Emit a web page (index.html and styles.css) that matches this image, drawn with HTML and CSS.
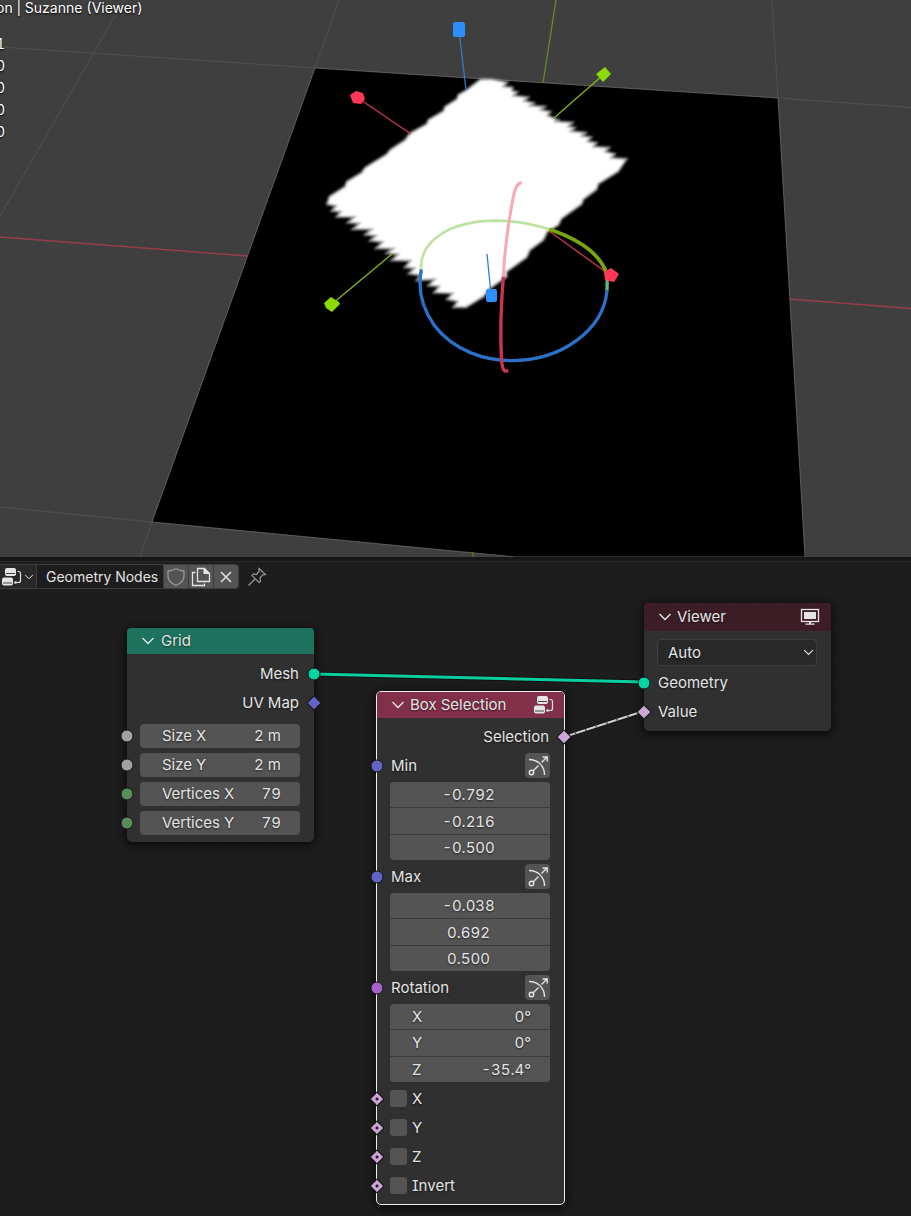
FILE: index.html
```html
<!DOCTYPE html>
<html lang="en">
<head>
<meta charset="utf-8">
<title>Geometry Nodes</title>
<link rel="stylesheet" href="styles.css">
</head>
<body>
<svg class="defs" width="0" height="0" aria-hidden="true">
  <symbol id="chevron" viewBox="0 0 14 14"><path d="M1.500 4L7 9.500l5.500-5.500" fill="none" stroke="currentColor" stroke-width="1.400"/></symbol>
  <symbol id="nodetree" viewBox="0 0 20 20">
    <rect x="3" y="1" width="11" height="8" rx="2"/><rect x="0" y="10.500" width="11" height="8" rx="2"/>
    <path d="M4 6.500h9M1 16h9" stroke="#444" stroke-width="1"/>
    <path d="M15.500 4.500h1q2 0 2 2v7q0 2-2 2h-3" fill="none" stroke="currentColor" stroke-width="1.200"/>
    <circle cx="13.500" cy="15.500" r="1.300"/>
  </symbol>
  <symbol id="shape" viewBox="0 0 24 24">
    <g fill="none" stroke="currentColor" stroke-width="1.400">
      <path d="M3 5.500c9 0 15.500 6.500 15.500 15.500M7 17l5.500-5.500M15.500 8.500L21 3M16.500 3H21.200V7.500"/><circle cx="5.500" cy="18.500" r="2.200"/>
    </g>
  </symbol>
</svg>

<main class="app">
  <section class="viewport" aria-label="3D viewport">
    <svg class="scene" viewBox="0 0 911 557" role="img" aria-label="Grid with selected region">
      <defs><filter id="soft"><feGaussianBlur stdDeviation="2.500"/></filter></defs>
      <g fill="none" stroke="#505050">
        <path d="M0 47L315 68M124 0L0 216M339 0L315 68M772 0L778 98L911 107.500M0 507L152 522L140 557"/>
      </g>
      <path d="M0 237L247 256M789 299L911 308.500" stroke="#963e4b" stroke-width="1.300"/>
      <path d="M556 0L543 83" stroke="#668b2a" stroke-width="1.300"/>
      <path d="M315 68L778 98L805 557H516L152 522Z" stroke="#777" stroke-width=".7"/>
      <path d="M473 552v5" stroke="#668b2a"/>
      <g transform="translate(310 0) scale(.333333)">
        <path filter="url(#soft)" fill="#fff" stroke="#999" stroke-width="6" d="M512 238L545 238L592 247L580 259L608 263L606 273L622 276L610 287L655 292L642 303L672 309L660 317L705 320L692 330L722 335L712 346L745 360L732 364L788 368L775 380L795 383L782 394L828 398L815 408L844 412L832 424L860 429L850 440L898 443L885 455L915 462L903 474L950 477L925 514L865 552L860 568L820 598L815 612L755 655L745 675L712 695L700 720L660 750L650 772L590 815L590 830L540 865L520 890L468 922L430 922L443 904L411 898L428 880L372 878L388 859L355 857L374 838L320 841L332 826L296 821L314 805L284 802L302 782L245 781L264 763L230 760L250 746L198 745L218 726L180 722L198 707L165 704L185 688L128 688L148 670L113 668L133 651L80 650L92 635L65 633L78 618L51 613L58 590L105 560L110 545L155 518L165 503L230 463L240 450L285 420L300 400L350 372L355 360L400 333L405 320L440 298L445 285L470 270Z"/>
      </g>
      <g stroke-width="1.300" fill="none">
        <path d="M459 30L466 90M487 254L491 294" stroke="#3479ce"/>
        <path d="M358 98L411 134M549 231L610 275" stroke="#cc3650"/>
        <path d="M603 75L554 118M332 304L392 254" stroke="#83b71b"/>
      </g>
      <g transform="translate(310 180) scale(.333333)" fill="none" stroke-width="10">
        <path d="M333 268C330 175 430 122 560 122C615 122 668 132 718 148" stroke="#bbe4a3" stroke-width="8"/>
        <path d="M718 148C800 176 865 215 888 275" stroke="#78a60c" stroke-width="11"/>
        <path d="M892 275L891 332" stroke="#5db886"/>
        <path d="M334 268C322 330 337 385 372 435C432 515 530 542 605 542C755 542 880 450 891 332" stroke="#2b71c7"/>
        <path d="M635 10Q618 4 608 60C595 130 584 205 580 290" stroke="#faa7af" stroke-width="9"/>
        <path d="M580 290C571 400 571 470 574 530Q576 575 588 573l7-1" stroke="#c83750"/>
      </g>
      <g>
        <path d="M453 23l2-1h9l1 2v12l-2 1h-9l-1-2zM486 290l2-1h8l1 2v10l-2 1h-8l-1-2z" fill="#2c8eff"/>
        <path d="M350 95l6-4 7 2 2 6-4 5-8-1zM604 272l7-4 8 6-5 8-9-2z" fill="#ff3858"/>
        <path d="M596 74l9-7 6 7-8 8zM324 303l7-6 8 5 1 2-8 8-6-4z" fill="#8adb05"/>
      </g>
    </svg>
    <div class="overlay">
      <p class="object-name">on | Suzanne (Viewer)</p>
      <ul class="stats"><li>1</li><li>0</li><li>0</li><li>0</li><li>0</li></ul>
    </div>
  </section>

  <section class="editor" aria-label="Node editor">
    <header class="toolbar">
      <div class="datablock">
        <button class="tool tree" aria-label="Browse node tree"><svg width="20" height="20"><use href="#nodetree"/></svg><svg width="10" height="10"><use href="#chevron"/></svg></button>
        <input class="tree-name" value="Geometry Nodes" aria-label="Node tree name">
        <button class="tool light dim" aria-label="Fake user"><svg width="20" height="20" viewBox="0 0 20 20"><path d="M10 1.500Q13 3.500 18 4v5q0 6-8 9.500Q2 15 2 9V4q5-.5 8-2.500z" fill="none" stroke="currentColor" stroke-width="1.300"/></svg></button>
        <button class="tool light" aria-label="Duplicate"><svg width="20" height="20" viewBox="0 0 20 20"><path d="M6.500 1.500h7l5 5v8h-12zM4.500 5.500h-3v13h12v-2" fill="none" stroke="currentColor" stroke-width="1.300"/><path d="M12.500 1l6.500 6h-6.500z" fill="currentColor"/></svg></button>
        <button class="tool light" aria-label="Unlink"><svg width="20" height="20" viewBox="0 0 20 20"><path d="M5 5l10 10M15 5L5 15" stroke="currentColor" stroke-width="1.500"/></svg></button>
      </div>
      <button class="pin" aria-label="Pin"><svg width="20" height="20" viewBox="0 0 20 20"><path d="M12 1.500l6.500 6-3 .5-2.500 3 .5 3.500-1.500 1-7-7 1.500-1.500 3 .5 2.500-3zM8 12l-6.500 6.500" fill="none" stroke="currentColor" stroke-width="1.200"/></svg></button>
    </header>

    <div class="canvas">
      <svg class="links" aria-hidden="true">
        <path d="M314 85L644 93" stroke="#111" stroke-width="5"/><path d="M314 85L644 93" stroke="#09cf9e" stroke-width="3"/>
        <path d="M564 148L644 122" stroke="#111" stroke-width="4"/><path d="M564 148L644 122" stroke="#d5cfd5" stroke-width="2"/>
        <path d="M564 148L644 122" stroke="#666" stroke-width="2" stroke-dasharray="2 9"/>
      </svg>

      <article class="node grid">
        <h2 class="title"><svg width="14" height="14"><use href="#chevron"/></svg>Grid</h2>
        <div class="rows">
          <div class="row out">Mesh<i class="socket right geo"></i></div>
          <div class="row out">UV Map<i class="socket right vec diamond"></i></div>
          <div class="inputs">
            <div class="row"><i class="socket float"></i><label class="field">Size X<input value="2 m"></label></div>
            <div class="row"><i class="socket float"></i><label class="field">Size Y<input value="2 m"></label></div>
            <div class="row"><i class="socket int"></i><label class="field">Vertices X<input value="79"></label></div>
            <div class="row"><i class="socket int"></i><label class="field">Vertices Y<input value="79"></label></div>
          </div>
        </div>
      </article>

      <article class="node viewer">
        <h2 class="title"><svg width="14" height="14"><use href="#chevron"/></svg>Viewer
          <svg class="badge" width="20" height="20" viewBox="0 0 20 20"><rect x="1.500" y="2.500" width="17" height="12" fill="none" stroke="currentColor" stroke-width="1.300"/><rect x="4" y="5" width="12" height="7"/><path d="M9 15h2v1.500h3.500v1.300h-9v-1.300H9z"/></svg></h2>
        <div class="rows">
          <div class="picker"><select aria-label="Domain"><option>Auto</option></select><svg width="11" height="11"><use href="#chevron"/></svg></div>
          <div class="row"><i class="socket geo"></i>Geometry</div>
          <div class="row"><i class="socket bool diamond"></i>Value</div>
        </div>
      </article>

      <article class="node box">
        <h2 class="title"><svg width="14" height="14"><use href="#chevron"/></svg>Box Selection
          <svg class="badge" width="20" height="20"><use href="#nodetree"/></svg></h2>
        <div class="rows">
          <div class="row out">Selection<i class="socket right bool diamond"></i></div>
          <div class="row name"><i class="socket vec"></i>Min<button class="shape" aria-label="Min shape"><svg width="24" height="24"><use href="#shape"/></svg></button></div>
          <div class="vector"><input aria-label="Min X" value="-0.792"><input aria-label="Min Y" value="-0.216"><input aria-label="Min Z" value="-0.500"></div>
          <div class="row name"><i class="socket vec"></i>Max<button class="shape" aria-label="Max shape"><svg width="24" height="24"><use href="#shape"/></svg></button></div>
          <div class="vector"><input aria-label="Max X" value="-0.038"><input aria-label="Max Y" value="0.692"><input aria-label="Max Z" value="0.500"></div>
          <div class="row name"><i class="socket rot"></i>Rotation<button class="shape" aria-label="Rotation shape"><svg width="24" height="24"><use href="#shape"/></svg></button></div>
          <div class="vector">
            <label class="field">X<input value="0°"></label>
            <label class="field">Y<input value="0°"></label>
            <label class="field">Z<input value="-35.4°"></label>
          </div>
          <div class="row"><i class="socket bool diamond dot"></i><label class="check"><input type="checkbox">X</label></div>
          <div class="row"><i class="socket bool diamond dot"></i><label class="check"><input type="checkbox">Y</label></div>
          <div class="row"><i class="socket bool diamond dot"></i><label class="check"><input type="checkbox">Z</label></div>
          <div class="row"><i class="socket bool diamond dot"></i><label class="check"><input type="checkbox">Invert</label></div>
        </div>
      </article>
    </div>
  </section>
</main>
</body>
</html>
```
FILE: styles.css
```css
* { box-sizing: border-box; }
body {
  margin: 0;
  background: #1d1d1d;
  color: #e4e4e4;
  font: 15px/20px Inter, "Liberation Sans", sans-serif;
  font-feature-settings: "cv08", "tnum";
}
.defs { position: absolute; }
button, input, select {
  margin: 0;
  padding: 0;
  border: 0;
  color: inherit;
  background: none;
  font: inherit;
  font-feature-settings: inherit;
  text-shadow: inherit;
}
svg { flex: none; fill: currentColor; }
.app { display: flex; flex-direction: column; min-height: 100vh; overflow: hidden; }

.viewport { position: relative; background: #3f3f3f; overflow: hidden; }
.scene { display: block; width: 100%; fill: #000; }
.overlay { position: absolute; top: -2px; left: -4px; color: #fff; font-size: 14px; text-shadow: 0 1px 2px #000; }
.object-name { margin: 0; }
.stats { margin: 15px 0 0; padding: 0; list-style: none; line-height: 22px; }

.editor { display: flex; flex: 1; flex-direction: column; border-top: 4px solid #171717; }
.toolbar { display: flex; align-items: center; gap: 8px; padding-top: 2px; border-top: 1px solid #292929; }
.datablock { display: flex; height: 25px; border: 1px solid #3d3d3d; border-left: 0; border-radius: 0 4px 4px 0; overflow: hidden; }
.tool { display: flex; align-items: center; justify-content: center; width: 25px; }
.tree { gap: 2px; width: 37px; background: #282828; border-right: 1px solid #3d3d3d; }
.light { background: #545454; border-left: 1px solid #3d3d3d; }
.dim, .pin { color: #999; }
.tree-name { width: 126px; padding-left: 9px; background: #1d1d1d; font-size: 14px; }
.pin { display: flex; }

.canvas {
  position: relative;
  flex: 1;
  min-height: 627px;
  background: radial-gradient(circle, #222 1px, transparent 1px) 13px 0 / 27px 27px;
}
.links { position: absolute; inset: 0; width: 100%; height: 100%; fill: none; }

.node {
  position: absolute;
  width: 187px;
  background: #303030;
  border-radius: 5px;
  box-shadow: 0 2px 8px 2px #0009;
  text-shadow: 0 1px 2px #0009;
}
.grid { left: 127px; top: 39px; }
.viewer { left: 644px; top: 14px; }
.box { left: 376px; top: 102px; width: 189px; border: 1px solid #eee; }
.title {
  display: flex;
  align-items: center;
  gap: 7px;
  height: 26px;
  margin: 0;
  padding: 0 11px 0 14px;
  border-radius: 4px 4px 0 0;
  background: #1d725e;
  font-size: 15px;
  font-weight: 400;
}
.grid .title { gap: 6px; }
.viewer .title { height: 28px; background: #3c1d26; gap: 5px; }
.box .title { background: #82304a; gap: 5px; padding-right: 10px; }
.badge { margin-left: auto; }
.rows { padding: 4px 14px 4px 13px; }
.grid .rows { padding-top: 5px; padding-bottom: 5px; }
.viewer .rows { padding-top: 8px; padding-bottom: 5px; }
.row { position: relative; display: flex; align-items: center; height: 29px; }
.viewer .row, .name { padding-left: 1px; }
.out { justify-content: flex-end; padding-right: 1px; }
.inputs { padding-top: 4px; }

.field { display: flex; align-items: center; width: 100%; padding: 0 19px 0 22px; background: #545454; white-space: nowrap; }
.row .field { height: 24px; border-radius: 4px; }
.field input { flex: 1; min-width: 0; width: 0; text-align: right; }
.vector { display: grid; gap: 1px; margin: 2px 0; border-radius: 4px; overflow: hidden; background: #3c3c3c; }
.vector > * { height: 25px; min-width: 0; background: #545454; }
.vector > :nth-child(2) { height: 26px; }
.vector > input { width: 100%; padding-right: 3px; text-align: center; }

.picker { position: relative; display: flex; align-items: center; margin-bottom: 2px; }
.picker select {
  width: 100%;
  height: 27px;
  padding: 0 10px;
  appearance: none;
  background: #282828;
  border: 1px solid #3d3d3d;
  border-radius: 4px;
}
.picker svg { position: absolute; right: 3px; pointer-events: none; }
.shape { display: grid; place-items: center; width: 25px; height: 25px; margin-left: auto; border-radius: 4px; background: #545454; }
.check { display: flex; align-items: center; gap: 5px; }
.check input { width: 17px; height: 17px; appearance: none; border-radius: 3px; background: #545454; }

.socket {
  position: absolute;
  left: -13px;
  top: 50%;
  width: 13px;
  height: 13px;
  border: 1px solid #161616;
  border-radius: 50%;
  translate: -50% -50%;
}
.socket.right { left: auto; right: -14px; translate: 50% -50%; }
.diamond { width: 11px; height: 11px; border-radius: 1px; rotate: 45deg; }
.geo { background: #00d6a3; }
.vec { background: #6363c7; }
.float { background: #a1a1a1; }
.int { background: #598c5c; }
.rot { background: #a663c7; }
.bool { background: #cca6d6; }
.dot { background: radial-gradient(circle, #222 1px, #cca6d6 2px); }
```
